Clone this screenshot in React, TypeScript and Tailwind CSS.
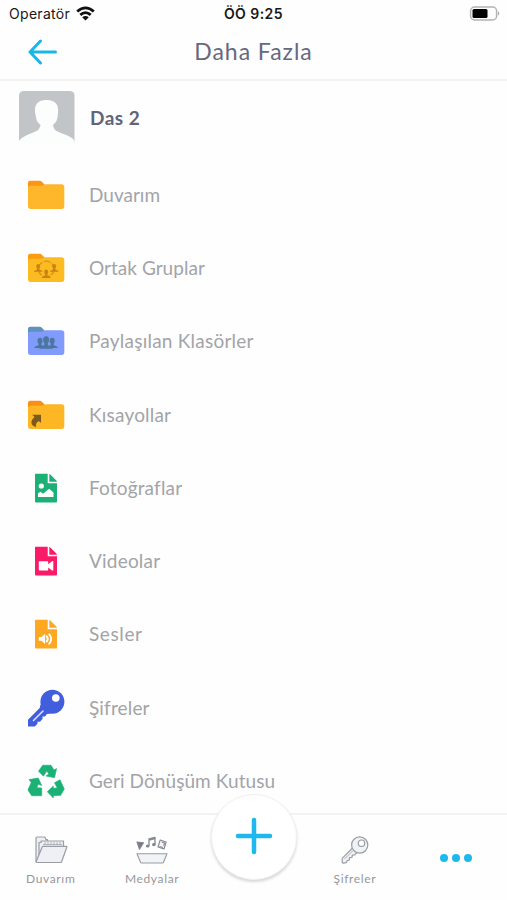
import type { ReactNode } from "react";

function Folder({ color, tab, children }: { color: string; tab: string; children?: ReactNode }) {
  return (
    <svg width="38" height="30" viewBox="0 0 38 30">
      <path d="M1 8V3.2C1 1.6 2 .8 3.5.8h9c1 0 1.6.3 2.3 1l3 3V9H1z" fill={tab} />
      <path
        d="M1 8.2C1 6.600 2 5.800 3.400 5.800H14c1 0 1.700-.3 2.500-.8.8-.6 1.500-.8 2.500-.8h15.500c1.700 0 2.800 1 2.800 2.600v19.400c0 1.700-1 2.700-2.700 2.700H3.700C2 28.900 1 27.900 1 26.200z"
        fill={color}
      />
      {children}
    </svg>
  );
}

function Person({ x, y, s = 1 }: { x: number; y: number; s?: number }) {
  return (
    <g transform={`translate(${x} ${y}) scale(${s})`}>
      <ellipse cx="0" cy="-5.200" rx="2.400" ry="2.900" />
      <path d="M-1.400-3.500h2.800v2.200c0 1 4 .9 4 3.100H-5.400c0-2.200 4-2.100 4-3.100z" />
    </g>
  );
}

function FileIcon({ color, children }: { color: string; children: ReactNode }) {
  return (
    <svg width="24" height="30" viewBox="0 0 24 30">
      <path d="M2 .7h11.700v9.500h9.300v18c0 .8-.5 1.300-1.300 1.300H2.300c-.8 0-1.300-.5-1.300-1.300V1.700c0-.6.4-1 1-1z" fill={color} />
      <path d="M15.300.9h.5l7 7v.8h-7.500z" fill={color} />
      {children}
    </svg>
  );
}

function GroupFolder() {
  return (
    <Folder color="#fdbb22" tab="#fb9b10">
      <circle cx="19.200" cy="16" r="7.800" fill="none" stroke="#d99517" strokeWidth="1.300" strokeDasharray="7 1.500" />
      <g fill="#c98412">
        <Person x={11.2} y={17.4} s={0.8} />
        <Person x={27.2} y={17.4} s={0.8} />
        <Person x={19.2} y={23.4} s={0.84} />
      </g>
    </Folder>
  );
}

function SharedFolder() {
  return (
    <Folder color="#809bfb" tab="#5e91bd">
      <g fill="#4b779e">
        <Person x={13} y={20.2} s={1.05} />
        <Person x={25.2} y={20.2} s={1.05} />
        <Person x={19.1} y={20.4} s={1.26} />
      </g>
    </Folder>
  );
}

function ShortcutFolder() {
  return (
    <Folder color="#fdb725" tab="#fb8f14">
      <path d="M5.200 14.700h8.800v8.300l-2.200-2c-2.600 1.600-3.200 3.300-2.800 6.200-5.600-1.600-6-6.300-1.400-10.100z" fill="#7c5a1c" />
    </Folder>
  );
}

function PhotoIcon() {
  return (
    <FileIcon color="#1bb176">
      <circle cx="7.300" cy="13" r="2.600" fill="#fff" />
      <path d="M4 23.900v-3.600l2.400-1.600 2.700 2 6-5 4.400 3.800v4.400z" fill="#fff" />
    </FileIcon>
  );
}

function VideoIcon() {
  return (
    <FileIcon color="#fa1a68">
      <path d="M5.800 15.200h7.400c.7 0 1 .4 1 1v2l3.800-3h1.300v9.300H18l-3.800-3v2c0 .7-.3 1-1 1H5.800c-.7 0-1-.3-1-1v-7.300c0-.6.3-1 1-1z" fill="#fff" />
    </FileIcon>
  );
}

function SoundIcon() {
  return (
    <FileIcon color="#fea821">
      <path d="M4.800 18h2.700l3.600-3.200v10.300l-3.600-3.300H4.800z" fill="#fff" />
      <path d="M12.700 17.300q2.200 2.600 0 5.200M15.100 15.100q4.200 4.800 0 9.700" fill="none" stroke="#fff" strokeWidth="1.800" strokeLinecap="round" />
    </FileIcon>
  );
}

function BlueKey() {
  return (
    <svg width="38" height="38" viewBox="0 0 38 38">
      <path d="M13.500 15.500 12.700 19 1 30.700v6.800h6.800l2.700-2.800v-2H13l2.500-2.600v-2.500H18l2-2.600 4-.5z" fill="#415fdd" />
      <circle cx="25.400" cy="12.700" r="12" fill="#415fdd" />
      <circle cx="28.800" cy="9" r="3.800" fill="#fff" />
      <path d="M6.500 31.500 16 22" stroke="#dce4ff" strokeWidth="1.500" strokeLinecap="round" />
    </svg>
  );
}

function Recycle() {
  return (
    <svg width="38" height="35" viewBox="0 0 38 35" fill="#1bb176" stroke="#1bb176" strokeWidth=".6" strokeLinejoin="round">
      <path d="M11.500 7.200 15.700 1.200H24l3 4.800 2.600-1.400-2.100 9.100-8.500-1.700 2.800-2-2.100-3-3.200 5.200z" />
      <path d="M2 15.600 11.300 14l3.400 7.500-3.400-1.200-1.500 3.400 4.900.3v7.700h-10L.9 26l3.300-7.500z" />
      <path d="m27.500 18.700 5.500-2.900 4.300 9.200-3.600 6.300-7.400.4V34l-6-6.300 6-5.700v2.300l3.900-.3z" />
    </svg>
  );
}

const items = [
  { label: "Duvarım", tracking: "tracking-[0px]", icon: <Folder color="#feb72b" tab="#fc9514" /> },
  { label: "Ortak Gruplar", tracking: "tracking-[0.03px]", icon: <GroupFolder /> },
  { label: "Paylaşılan Klasörler", tracking: "tracking-[0.23px]", icon: <SharedFolder /> },
  { label: "Kısayollar", tracking: "tracking-[0.2px]", icon: <ShortcutFolder /> },
  { label: "Fotoğraflar", tracking: "tracking-[0.16px]", icon: <PhotoIcon /> },
  { label: "Videolar", tracking: "tracking-[0.2px]", icon: <VideoIcon /> },
  { label: "Sesler", tracking: "tracking-[0.6px]", icon: <SoundIcon /> },
  { label: "Şifreler", tracking: "tracking-[0.15px]", icon: <BlueKey /> },
  { label: "Geri Dönüşüm Kutusu", tracking: "tracking-[0.08px]", icon: <Recycle /> },
];

function StatusBar() {
  return (
    <div className="grid h-[27px] shrink-0 grid-cols-3 items-center pl-[9px] pr-[7px] font-['Inter',sans-serif] text-[14px] text-[#181818]">
      <div className="flex items-center gap-[6px]">
        <span className="tracking-[0.3px]">Operatör</span>
        <svg width="19" height="15" viewBox="0 0 19 15" fill="none" stroke="#111" strokeWidth="2.800">
          <path d="M1.200 5.500q8.300-7.300 16.600 0M4.300 8.900q5.200-4.600 10.400 0" />
          <path d="m6.200 11.300 3.300 3.200 3.300-3.200q-3.300-2.500-6.600 0z" fill="#111" stroke="none" />
        </svg>
      </div>
      <span className="-ml-[2px] text-center font-semibold tracking-[0.45px]">ÖÖ 9:25</span>
      <svg className="justify-self-end" width="31" height="15" viewBox="0 0 31 15">
        <rect x="1.600" y="1" width="26" height="13" rx="4" fill="#fff" stroke="#b3b3b3" strokeWidth="1.500" />
        <rect x="3.500" y="3" width="15" height="9" rx="1.500" fill="#000" />
        <path d="M29 5.300q2.500 2.200 0 4.400z" fill="#aaa" />
      </svg>
    </div>
  );
}

function TabFolder() {
  return (
    <svg width="34" height="28" viewBox="0 0 34 28" fill="#eff0f5" stroke="#9a9da5" strokeWidth="1.200" strokeLinejoin="round">
      <path d="M2 25.500V2.300C2 1.600 2.400 1 3.200 1h7.600l1.300 2.700h1.400V11z" />
      <path d="M5 20V6.500h2V5h22.500v15" />
      <path d="M9 8.500h19M11 6v2.500M14 6v2.500M17 6v2.500M20 6v2.500M23 6v2.500M26 6v2.500" strokeWidth=".7" />
      <path d="M9.300 10.300h23c.5 0 .7.400.5.900l-5.200 14.500c-.2.500-.6.800-1.200.8H3c-.7 0-1-.4-.8-1l6-14.600c.2-.4.600-.6 1.100-.6z" />
    </svg>
  );
}

function TabMedia() {
  return (
    <svg width="34" height="28" viewBox="0 0 34 28" fill="none" stroke="#85888f" strokeWidth="1.100" strokeLinejoin="round">
      <path d="m2 6 6.500.8-4 6.500z" fill="#777b82" />
      <path d="M14 10V2.800l6-1.400v7.100M14 4l6-1.400" strokeWidth="1.300" />
      <ellipse cx="12.700" cy="10" rx="1.300" ry="1" fill="#777b82" />
      <ellipse cx="18.900" cy="8.600" rx="1.300" ry="1" fill="#777b82" />
      <path d="m25.200 4 6 2-2.200 7-6-2z" fill="#f5f5f7" />
      <path d="m26.600 6 3 1-1 2.800M24.500 10.500l3.500 1" />
      <path d="M2 17.700h30l-3.500 8.500c-.2.500-.6.800-1.200.8H6.700c-.6 0-1-.3-1.200-.8z" fill="#f2f3f6" stroke="#989ba2" />
    </svg>
  );
}

function TabKey() {
  return (
    <svg width="28" height="28" viewBox="0 0 28 28" fill="#f1f2f5" stroke="#9a9da5" strokeWidth="1.200" strokeLinejoin="round">
      <path d="M11.500 12 1.200 22.400v4.100l1 .7 3.200-.6.800-2.100 2-.4.300-2.500 2.500-.2.300-2.300 2.500-.3 2.500-3z" />
      <circle cx="18.700" cy="9" r="8.100" />
      <circle cx="20.500" cy="7.200" r="3.200" fill="#fff" />
      <path d="M3.500 23 12 14.500" strokeWidth=".8" />
    </svg>
  );
}

function Tab({ label, children }: { label: string; children: ReactNode }) {
  return (
    <div className="flex flex-1 flex-col items-center pt-[21px]">
      {children}
      <span className="mt-[8px] text-[12px] leading-[14px] tracking-[0.65px] text-[#96989c]">{label}</span>
    </div>
  );
}

export default function App() {
  return (
    <div className="flex h-[900px] w-[507px] flex-col overflow-hidden bg-[#fefefe] font-['Lato',sans-serif]">
      <StatusBar />
      <header className="grid h-[54px] shrink-0 grid-cols-[83px_1fr_83px] items-center border-b-2 border-[#f3f3f4] pb-[3px]">
        <svg className="ml-[28px]" width="30" height="26" viewBox="0 0 30 26" fill="none" stroke="#1bb6e7" strokeWidth="3" strokeLinecap="round" strokeLinejoin="round">
          <path d="M12.500 2 2 13l10.500 11M2 13h25.500" />
        </svg>
        <h1 className="-mt-px text-center text-[23px] leading-[28px] tracking-[0.95px] text-[#666880]">Daha Fazla</h1>
      </header>

      <main className="h-[732px] shrink-0 overflow-hidden">
        <div className="flex h-[77px] items-start pl-[19px] pt-[10px]">
          <svg width="56" height="52" viewBox="0 0 56 52">
            <path d="M0 52V5q0-5 5-5h45.500q5 0 5 5v47z" fill="#c2c5c7" />
            <path d="M0 52v-2c2-3.500 8-6 13-8 5-2 7.500-3 8.500-8-3-3-4-4-4.500-8C14 14 18 9 27.500 9S41 14 38.500 26c-.5 4-1.500 5-4.500 8 1 5 3 6 8 8 5 2 11.500 4 13.500 8v2z" fill="#fcfefe" />
          </svg>
          <span className="ml-[15px] mt-[15px] text-[19px] font-bold leading-[24px] tracking-[0.5px] text-[#61647a]">Das 2</span>
        </div>
        <ul>
          {items.map(({ label, tracking, icon }) => (
            <li key={label} className="flex h-[73.3px] items-center pl-[27px]">
              <span className="flex w-[38px] justify-center">{icon}</span>
              <span className={`ml-6 text-[19px] leading-[24px] text-[#a2a4a8] ${tracking}`}>{label}</span>
            </li>
          ))}
        </ul>
      </main>

      <nav className="relative flex h-[87px] shrink-0 border-t-2 border-[#f3f3f4]">
        <Tab label="Duvarım"><TabFolder /></Tab>
        <Tab label="Medyalar"><TabMedia /></Tab>
        <div className="flex-1" />
        <Tab label="Şifreler"><TabKey /></Tab>
        <div className="flex flex-1 items-start justify-center gap-1 pt-[39px]">
          {[0, 1, 2].map((i) => (
            <span key={i} className="size-2 rounded-full bg-[#1cb8ee]" />
          ))}
        </div>
        <button className="absolute -top-[21px] left-[211px] flex size-[86px] items-center justify-center rounded-full border border-[#f1f1f3] bg-white shadow-[0_2px_3px_rgba(0,0,0,0.16)]">
          <svg className="-mt-[3px]" width="38" height="38" viewBox="0 0 38 38" stroke="#1cb8ee" strokeWidth="4.500" strokeLinecap="round">
            <path d="M19 3v32M3 19h32" />
          </svg>
        </button>
      </nav>
    </div>
  );
}
